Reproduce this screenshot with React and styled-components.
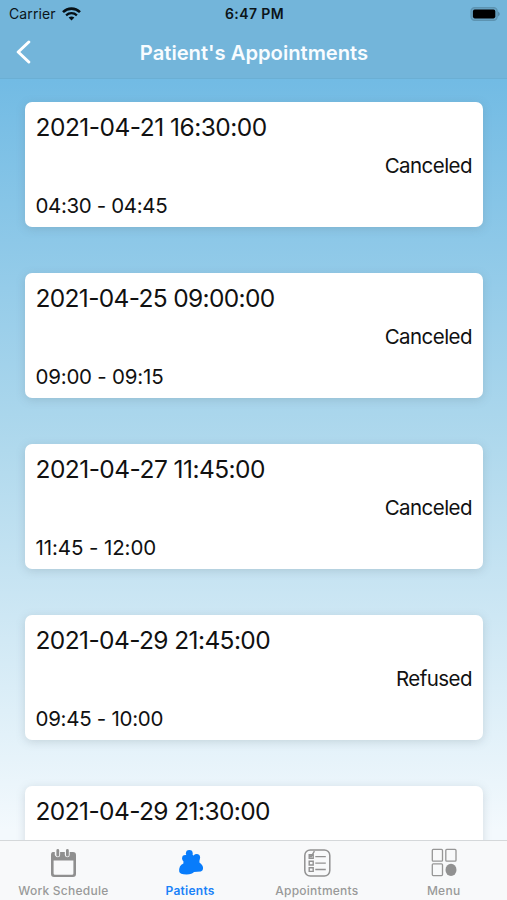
import React from 'react';
import styled, { createGlobalStyle } from 'styled-components';

const GlobalStyle = createGlobalStyle`
  * {
    box-sizing: border-box;
  }

  body {
    margin: 0;
    overflow: hidden;
    font-family: Inter, 'Liberation Sans', sans-serif;
    color: #111;
  }
`;

const Screen = styled.div`
  width: 507px;
  height: 900px;
  display: flex;
  flex-direction: column;
  overflow: hidden;
  background: linear-gradient(#72bbe4 80px, #b0d9ed 450px, #f3f9fd 830px);
`;

const Header = styled.header`
  flex: none;
  height: 79px;
  background: #73b5da;
  border-bottom: 1px solid #6bafd4;
`;

const StatusBar = styled.div`
  height: 27px;
  padding: 0 7px 0 9px;
  display: grid;
  grid-template-columns: 1fr auto 1fr;
  align-items: center;
  font-size: 14px;
  line-height: 27px;
  color: #0b1419;
`;

const Carrier = styled.div`
  display: flex;
  align-items: center;
  gap: 6px;
  letter-spacing: 0.1px;
`;

const Clock = styled.div`
  font-weight: 600;
  font-size: 14px;
  letter-spacing: 0.4px;
`;

const Battery = styled.div`
  display: flex;
  justify-content: flex-end;
`;

const TitleBar = styled.div`
  height: 51px;
  display: grid;
  grid-template-columns: 60px 1fr 60px;
  align-items: center;
`;

const BackButton = styled.button`
  padding: 0 0 1px 15px;
  border: 0;
  background: none;
  display: flex;
`;

const Title = styled.h1`
  margin: 0;
  padding-left: 1px;
  text-align: center;
  font-size: 20.2px;
  font-weight: 600;
  line-height: 50px;
  color: #f8fcff;
`;

const List = styled.main`
  flex: 1;
  min-height: 0;
  overflow: hidden;
  padding: 23px 24px 0 25px;
`;

const Card = styled.article`
  height: 125px;
  margin-bottom: 46px;
  padding: 10px 11px 0 10.5px;
  display: flex;
  flex-direction: column;
  background: #fff;
  border-radius: 7px;
  box-shadow: 0 2px 10px rgba(90, 110, 125, 0.22);
`;

const DateText = styled.div`
  font-size: 24.5px;
  line-height: 30px;
  letter-spacing: ${props => props.$tracking}px;
`;

const Status = styled.div`
  margin-top: 10px;
  text-align: right;
  font-size: 20.5px;
  line-height: 27px;
  letter-spacing: -0.55px;
`;

const Time = styled.div`
  margin-top: 13px;
  font-size: 20.5px;
  line-height: 27px;
  letter-spacing: ${props => props.$tracking}px;
`;

const TabBar = styled.nav`
  flex: none;
  height: 60px;
  display: grid;
  grid-template-columns: repeat(4, 1fr);
  background: #f8f9fa;
  border-top: 1px solid #d5d8da;
`;

const Tab = styled.div`
  display: flex;
  flex-direction: column;
  align-items: center;
  padding-top: 6px;
  font-size: 12px;
  line-height: 16px;
  font-weight: ${props => (props.$active ? 600 : 500)};
  letter-spacing: 0.25px;
  color: ${props => (props.$active ? '#1a82f8' : '#999')};

  svg {
    display: block;
    margin-bottom: 6px;
  }
`;

const WifiIcon = () => (
  <svg width="19" height="14" viewBox="0 0 19 14" fill="none" stroke="#071015">
    <path d="M1 5.1C5.8.5 13.2.5 18 5.1" strokeWidth="2.6" />
    <path d="M4.1 8.3C7.2 5.4 11.8 5.4 14.9 8.3" strokeWidth="2.3" />
    <path d="M6.6 10.6Q9.5 8.5 12.4 10.6L9.5 13.6Z" fill="#071015" stroke="none" />
  </svg>
);

const BatteryIcon = () => (
  <svg width="30" height="14" viewBox="0 0 30 14">
    <rect x="1" y=".7" width="26.2" height="12.6" rx="3.6" fill="#68a3c4" stroke="#5c93b1" strokeWidth="1.2" />
    <rect x="2.9" y="2.6" width="22.4" height="8.8" rx="1.8" fill="#000" />
    <path d="M28.2 4.5Q31.2 7 28.2 9.5Z" fill="#4e819d" />
  </svg>
);

const BackIcon = () => (
  <svg width="16" height="24" viewBox="0 0 16 24" fill="none" stroke="#fff">
    <path d="M13.8 2L3.2 12L13.8 22" strokeWidth="3" strokeLinecap="round" strokeLinejoin="round" />
  </svg>
);

const CalendarIcon = () => (
  <svg width="28" height="30" viewBox="0 0 28 30">
    <path
      fill="#8f8f8f"
      fillRule="evenodd"
      d="M4 5H5.8V8Q7.8 11 9.8 8V5H15.8V8Q17.8 11 19.8 8V5H24Q27 5 27 8V27Q27 30 24 30H5Q2 30 2 27V8Q2 5 4 5ZM4.6 13.6V26.4Q4.6 27.8 6 27.8H23Q24.4 27.8 24.4 26.4V13.6Z"
    />
    <path d="M8.8 3.5V8M18.4 3.5V8" stroke="#f8f9fa" strokeWidth="4.6" strokeLinecap="round" />
    <path d="M8.8 3.5V8.2M18.4 3.5V8.2" stroke="#8f8f8f" strokeWidth="2.8" strokeLinecap="round" />
  </svg>
);

const PatientsIcon = () => (
  <svg width="28" height="30" viewBox="0 0 28 30" fill="#087cfb">
    <circle cx="13.3" cy="6.3" r="3.4" />
    <circle cx="20.6" cy="10.4" r="3.5" />
    <circle cx="9.3" cy="11.2" r="3.2" />
    <path d="M3.2 24.5Q2.6 18.5 7.4 16.4L7.5 12L10.4 8L16.4 7.5L18 9L23.5 12.5L23.4 15.6Q27.5 18.2 27 22Q26.8 24 24.8 24.4L18 25Q16.2 27.3 10.6 27.4Q3.6 27.4 3.2 24.5Z" />
  </svg>
);

const ChecklistIcon = () => (
  <svg width="28" height="30" viewBox="0 0 28 30" fill="none" stroke="#919191">
    <rect x="1.8" y="2.9" width="25" height="26.2" rx="5.5" strokeWidth="1.5" />
    <path
      d="M6.2 7.6H10.2V11.4H6.2ZM6.2 14.3H10.2V18H6.2ZM6.2 20.7H10.2V24.4H6.2ZM12.3 9.6H22.8M12.3 16.1H22.8M12.3 22.5H22.8M6.4 7.8L8 10L11.4 4.2"
      strokeWidth="1.4"
    />
  </svg>
);

const MenuIcon = () => (
  <svg width="28" height="30" viewBox="0 0 28 30" fill="none" stroke="#969696" strokeWidth="1.3">
    <rect x="2.3" y="2.4" width="10.2" height="11.8" rx="1" />
    <rect x="15.8" y="2.4" width="10.2" height="11.8" rx="1" />
    <rect x="2.3" y="16.8" width="10.2" height="11.8" rx="1" />
    <ellipse cx="21" cy="22.9" rx="5.5" ry="6.1" fill="#919191" stroke="none" />
  </svg>
);

// tracking is [date, time] letter spacing in px
const appointments = [
  { date: '2021-04-21 16:30:00', status: 'Canceled', time: '04:30 - 04:45', tracking: [-0.51, -0.36] },
  { date: '2021-04-25 09:00:00', status: 'Canceled', time: '09:00 - 09:15', tracking: [-0.66, -0.22] },
  { date: '2021-04-27 11:45:00', status: 'Canceled', time: '11:45 - 12:00', tracking: [-0.54, -0.1] },
  { date: '2021-04-29 21:45:00', status: 'Refused', time: '09:45 - 10:00', tracking: [-0.6, -0.28] },
  { date: '2021-04-29 21:30:00', tracking: [-0.6, 0] },
];

const tabs = [
  { label: 'Work Schedule', Icon: CalendarIcon },
  { label: 'Patients', Icon: PatientsIcon, active: true },
  { label: 'Appointments', Icon: ChecklistIcon },
  { label: 'Menu', Icon: MenuIcon },
];

export default function App() {
  return (
    <Screen>
      <GlobalStyle />
      <Header>
        <StatusBar>
          <Carrier>
            Carrier
            <WifiIcon />
          </Carrier>
          <Clock>6:47 PM</Clock>
          <Battery>
            <BatteryIcon />
          </Battery>
        </StatusBar>
        <TitleBar>
          <BackButton aria-label="Back">
            <BackIcon />
          </BackButton>
          <Title>Patient&apos;s Appointments</Title>
        </TitleBar>
      </Header>
      <List>
        {appointments.map(({ date, status, time, tracking }) => (
          <Card key={date}>
            <DateText $tracking={tracking[0]}>{date}</DateText>
            {status && <Status>{status}</Status>}
            {time && <Time $tracking={tracking[1]}>{time}</Time>}
          </Card>
        ))}
      </List>
      <TabBar>
        {tabs.map(({ label, Icon, active }) => (
          <Tab key={label} $active={active}>
            <Icon />
            {label}
          </Tab>
        ))}
      </TabBar>
    </Screen>
  );
}
